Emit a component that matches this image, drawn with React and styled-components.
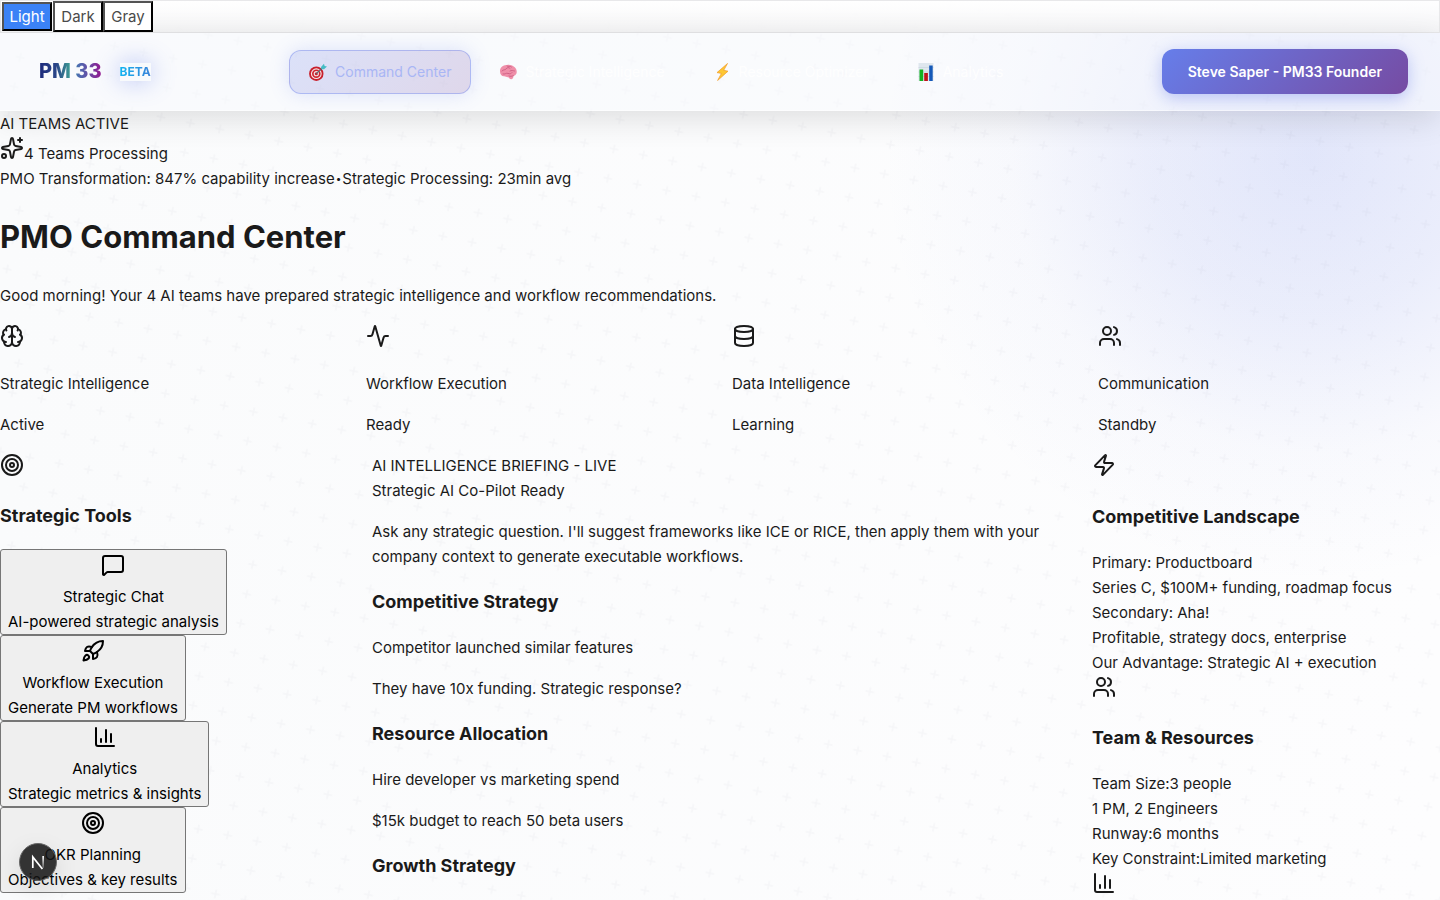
import React from "react";
import styled, { createGlobalStyle } from "styled-components";
import { Sparkles, Brain, Activity, Database, Users, Target, Zap, MessageSquare, Rocket, ChartColumn } from "lucide-react";

const GlobalStyle = createGlobalStyle`
  * { box-sizing: border-box; }
  html { scrollbar-width: none; }
  body {
    margin: 0;
    background: #fafbfc;
    color: #1a1a1a;
    font-family: Inter, "Liberation Sans", sans-serif;
    font-size: 15px;
    line-height: 25px;
  }
`;

const Page = styled.div`
  position: relative;
  isolation: isolate;
  min-height: 100vh;
  overflow: hidden;
  background:
    radial-gradient(circle at 91% 17%, rgba(102, 126, 234, 0.18), rgba(102, 126, 234, 0.12) 160px, rgba(102, 126, 234, 0.03) 300px, transparent 430px),
    linear-gradient(90deg, #fafbfc, #fdfdfe);
`;

const Backdrop = styled.svg`
  position: absolute;
  inset: 0;
  width: 100%;
  height: 100%;
  z-index: -1;
`;

const ThemeBar = styled.div`
  display: flex;
  align-items: center;
  border: 1px solid #e8e8ea;
  background: linear-gradient(rgba(255, 255, 255, 0.95), rgba(246, 246, 247, 0.9));
  height: 33px;
`;

const ThemeButton = styled.button`
  font: inherit;
  line-height: 25px;
  width: 50px;
  padding: ${(p) => (p.$active ? "0" : "1px 0")};
  margin: ${(p) => (p.$active ? "0 1px" : "0")};
  border: 2px outset #000;
  background: ${(p) => (p.$active ? "#3b82f6" : "#fff")};
  color: ${(p) => (p.$active ? "#fff" : "#4a4a4a")};
`;

const NavBar = styled.nav`
  display: flex;
  align-items: center;
  justify-content: space-between;
  padding: 16px 32px;
  background: rgba(248, 250, 253, 0.5);
  border-bottom: 1px solid rgba(255, 255, 255, 0.5);
  box-shadow: 0 8px 32px rgba(0, 0, 0, 0.12);
`;

const Brand = styled.div`
  display: flex;
  align-items: center;
  gap: 18px;
  padding-left: 7px;
`;

const Logo = styled.span`
  font-size: 20px;
  font-weight: 800;
  color: transparent;
  background: linear-gradient(90deg, #1d2a7c, #2b4688 28%, #3fa796 52%, #4a6db0 62%, #6a4aa5 80%, #98148e);
  background-clip: text;
`;

const Beta = styled.span`
  font-size: 12px;
  font-weight: 700;
  line-height: 18px;
  color: transparent;
  background: linear-gradient(90deg, #12b4f0, #3b82d8) text, #f8fafc;
  box-shadow: 0 0 24px rgba(102, 126, 234, 0.45);
`;

const NavLinks = styled.div`
  display: flex;
  gap: 8px;
`;

const NavLink = styled.a`
  display: flex;
  align-items: center;
  gap: 8px;
  height: 44px;
  padding: 0 19px;
  font-size: 14px;
  font-weight: 400;
  text-decoration: none;
  border-radius: 12px;
  border: 1px solid ${(p) => (p.$active ? "rgba(102, 126, 234, 0.4)" : "transparent")};
  color: ${(p) => (p.$active ? "#a9b6f5" : "rgba(255, 255, 255, 0.9)")};
  background: ${(p) => (p.$active ? "linear-gradient(135deg, rgba(102, 126, 234, 0.2), rgba(118, 75, 162, 0.2))" : "none")};
  box-shadow: ${(p) => (p.$active ? "0 0 20px rgba(102, 126, 234, 0.2)" : "none")};
`;

const UserButton = styled.button`
  font: inherit;
  font-size: 14px;
  font-weight: 600;
  height: 45px;
  padding: 0 26px;
  color: #fff;
  border: 0;
  border-radius: 12px;
  background: linear-gradient(135deg, #667eea, #764ba2);
  box-shadow: 0 4px 16px rgba(102, 126, 234, 0.4);
`;

const IconRow = styled.div`
  display: flex;
  height: ${(p) => (p.$tight ? "30px" : "31px")};
  justify-content: ${(p) => (p.$center ? "center" : "flex-start")};
`;

const IconLabel = styled.span`
  align-self: flex-end;
`;

const Metrics = styled.div`
  display: flex;
`;

const Separator = styled.span`
  padding: 0 1px;
  font-size: 10px;
`;

const Title = styled.h1`
  margin: 21px 0;
  font-size: 31px;
  line-height: 50px;
  font-weight: 700;
`;

const Heading = styled.h3`
  margin: 19px 0;
  font-size: 18px;
  line-height: 28px;
  font-weight: 700;
`;

const Text = styled.p`
  margin: 16px 0;
`;

const StatusGrid = styled.section`
  display: grid;
  grid-template-columns: repeat(4, 1fr);
  gap: 24px;
`;

const MainGrid = styled.section`
  display: grid;
  grid-template-columns: 1fr 2fr 1fr;
  gap: 24px;
`;

const Column = styled.div`
  min-width: 0;
`;

const ToolButton = styled.button`
  display: block;
  font: inherit;
  color: #000;
  background: #efefef;
  border: 1px solid #767676;
  border-radius: 3px;
  padding: 2px 7px 0;
  height: 86px;
  text-align: center;
`;

const DevBadge = styled.button`
  position: fixed;
  left: 19px;
  bottom: 19px;
  width: 38px;
  height: 38px;
  padding: 0;
  border: 1px solid #666;
  border-radius: 50%;
  background: rgba(20, 20, 20, 0.86);
  box-shadow: 0 8px 24px rgba(0, 0, 0, 0.1);
`;

const TargetEmoji = () => (
  <svg width="18" height="18" viewBox="0 0 18 18" aria-hidden="true">
    <circle cx="7.3" cy="10.7" r="7.2" fill="#c8202c" />
    <circle cx="7.3" cy="10.7" r="5.4" fill="#f3e4e4" />
    <circle cx="7.3" cy="10.7" r="4.3" fill="#d0232e" />
    <circle cx="7.3" cy="10.7" r="2.6" fill="#f3e4e4" />
    <circle cx="7.3" cy="10.7" r="1.5" fill="#c8202c" />
    <path d="M7.3 10.7 14 4.6" stroke="#4a6f78" strokeWidth="1.1" />
    <path d="m12 4 3-3.3.6 2.2 2.4.5-3 2.9-2.6-.2z" fill="#45bcc4" />
  </svg>
);

const BrainEmoji = () => (
  <svg width="18" height="18" viewBox="0 0 18 18" aria-hidden="true">
    <path d="M1 8.5C.8 5.4 3 2.7 6 2.2 9.500 1 14 1.8 16 4.6c2 2.3 2.4 5.4.6 7.2-.5.8-1.3 1-2.1 1.1.1 1.6-.8 3.2-2.3 3.3-1.5.1-2-1.4-2.9-2-1.8.2-2.6-1-4.2-1C2.800 13.400.9 11 1 8.500z" fill="#ef8fa9" />
    <path d="M3 8c1.5-2 3-.5 4-2s2.500-2 4-.7M4 11c2 .6 3-1.3 5-.6s3 .5 4-.8M8 3c1.500 1 3-.3 4.500 1M11 8c1.500-1 3-.3 4.500 0M10 13c1 .6 3 .3 4.300-.3" fill="none" stroke="#c9577d" strokeWidth=".8" strokeLinecap="round" />
  </svg>
);

const BoltEmoji = () => (
  <svg width="18" height="18" viewBox="0 0 18 18" aria-hidden="true">
    <path d="M14.500.5 4 9.600l4.400.8L4.600 17.500 15 8.200l-4.300-.9z" fill="#fdc733" stroke="#f29b27" strokeWidth=".7" />
  </svg>
);

const ChartEmoji = () => (
  <svg width="18" height="18" viewBox="0 0 18 18" aria-hidden="true">
    <path d="M1.500 0h15v18h-15z" fill="#dfe7ee" />
    <path d="M1.500 4.500h15M1.500 9h15M1.500 13.500h15" stroke="#c5d3de" strokeWidth=".6" />
    <path d="M2.500 6.500h3.700V18H2.500z" fill="#13b321" />
    <path d="M7.200 10h3.700v8H7.200z" fill="#c0151b" />
    <path d="M12.200 2.500h3.500V18h-3.500z" fill="#1559b8" />
  </svg>
);

const NAV = [
  { label: "Command Center", Icon: TargetEmoji, active: true },
  { label: "Strategic Intelligence", Icon: BrainEmoji },
  { label: "Resource Optimizer", Icon: BoltEmoji },
  { label: "Analytics", Icon: ChartEmoji },
];

const STATUS = [
  { name: "Strategic Intelligence", state: "Active", Icon: Brain },
  { name: "Workflow Execution", state: "Ready", Icon: Activity },
  { name: "Data Intelligence", state: "Learning", Icon: Database },
  { name: "Communication", state: "Standby", Icon: Users },
];

const TOOLS = [
  { name: "Strategic Chat", note: "AI-powered strategic analysis", Icon: MessageSquare },
  { name: "Workflow Execution", note: "Generate PM workflows", Icon: Rocket },
  { name: "Analytics", note: "Strategic metrics & insights", Icon: ChartColumn },
  { name: "OKR Planning", note: "Objectives & key results", Icon: Target },
];

export default function App() {
  return (
    <Page>
      <GlobalStyle />
      <Backdrop aria-hidden="true">
        <defs>
          <pattern id="plus" width="30" height="30" patternUnits="userSpaceOnUse" patternTransform="translate(161 117) rotate(11.63) translate(-15 -15)">
            <path d="M15 10.5v9M10.5 15h9" stroke="#5a5a78" strokeOpacity=".04" strokeWidth="1.5" />
          </pattern>
        </defs>
        <rect width="100%" height="100%" fill="url(#plus)" />
      </Backdrop>

      <ThemeBar>
        <ThemeButton $active>Light</ThemeButton>
        <ThemeButton>Dark</ThemeButton>
        <ThemeButton>Gray</ThemeButton>
      </ThemeBar>

      <NavBar>
        <Brand>
          <Logo>PM 33</Logo>
          <Beta>BETA</Beta>
        </Brand>
        <NavLinks>
          {NAV.map(({ label, Icon, active }) => (
            <NavLink key={label} href="#" $active={active}>
              <Icon />
              {label}
            </NavLink>
          ))}
        </NavLinks>
        <UserButton>Steve Saper - PM33 Founder</UserButton>
      </NavBar>

      <main>
        <div>AI TEAMS ACTIVE</div>
        <IconRow $tight>
          <Sparkles />
          <IconLabel>4 Teams Processing</IconLabel>
        </IconRow>
        <Metrics>
          <span>PMO Transformation: 847% capability increase</span>
          <Separator>•</Separator>
          <span>Strategic Processing: 23min avg</span>
        </Metrics>
        <Title>PMO Command Center</Title>
        <Text>Good morning! Your 4 AI teams have prepared strategic intelligence and workflow recommendations.</Text>

        <StatusGrid>
          {STATUS.map(({ name, state, Icon }) => (
            <Column key={name}>
              <IconRow><Icon /></IconRow>
              <Text>{name}</Text>
              <Text>{state}</Text>
            </Column>
          ))}
        </StatusGrid>

        <MainGrid>
          <Column>
            <IconRow $tight><Target /></IconRow>
            <Heading>Strategic Tools</Heading>
            {TOOLS.map(({ name, note, Icon }) => (
              <ToolButton key={name}>
                <IconRow $center><Icon /></IconRow>
                <div>{name}</div>
                <div>{note}</div>
              </ToolButton>
            ))}
          </Column>

          <Column>
            <div>AI INTELLIGENCE BRIEFING - LIVE</div>
            <div>Strategic AI Co-Pilot Ready</div>
            <Text>
              Ask any strategic question. I'll suggest frameworks like ICE or RICE, then apply them with your
              company context to generate executable workflows.
            </Text>
            <Heading>Competitive Strategy</Heading>
            <Text>Competitor launched similar features</Text>
            <Text>They have 10x funding. Strategic response?</Text>
            <Heading>Resource Allocation</Heading>
            <Text>Hire developer vs marketing spend</Text>
            <Text>$15k budget to reach 50 beta users</Text>
            <Heading>Growth Strategy</Heading>
          </Column>

          <Column>
            <IconRow><Zap /></IconRow>
            <Heading>Competitive Landscape</Heading>
            <div>Primary: Productboard</div>
            <div>Series C, $100M+ funding, roadmap focus</div>
            <div>Secondary: Aha!</div>
            <div>Profitable, strategy docs, enterprise</div>
            <div>Our Advantage: Strategic AI + execution</div>
            <IconRow $tight><Users /></IconRow>
            <Heading>Team &amp; Resources</Heading>
            <div>Team Size:3 people</div>
            <div>1 PM, 2 Engineers</div>
            <div>Runway:6 months</div>
            <div>Key Constraint:Limited marketing</div>
            <IconRow><ChartColumn /></IconRow>
          </Column>
        </MainGrid>
      </main>

      <DevBadge aria-label="Open developer tools">
        <svg width="36" height="36" viewBox="0 0 36 36" fill="none" aria-hidden="true">
          <defs>
            <linearGradient id="stem" x1="0" y1="12" x2="0" y2="24" gradientUnits="userSpaceOnUse">
              <stop stopColor="#fff" />
              <stop offset="1" stopColor="#fff" stopOpacity=".2" />
            </linearGradient>
          </defs>
          <path d="M12.800 24V13l9.600 12" stroke="#fff" strokeWidth="1.7" />
          <path d="M22.300 12h1.700v12h-1.700z" fill="url(#stem)" />
        </svg>
      </DevBadge>
    </Page>
  );
}
